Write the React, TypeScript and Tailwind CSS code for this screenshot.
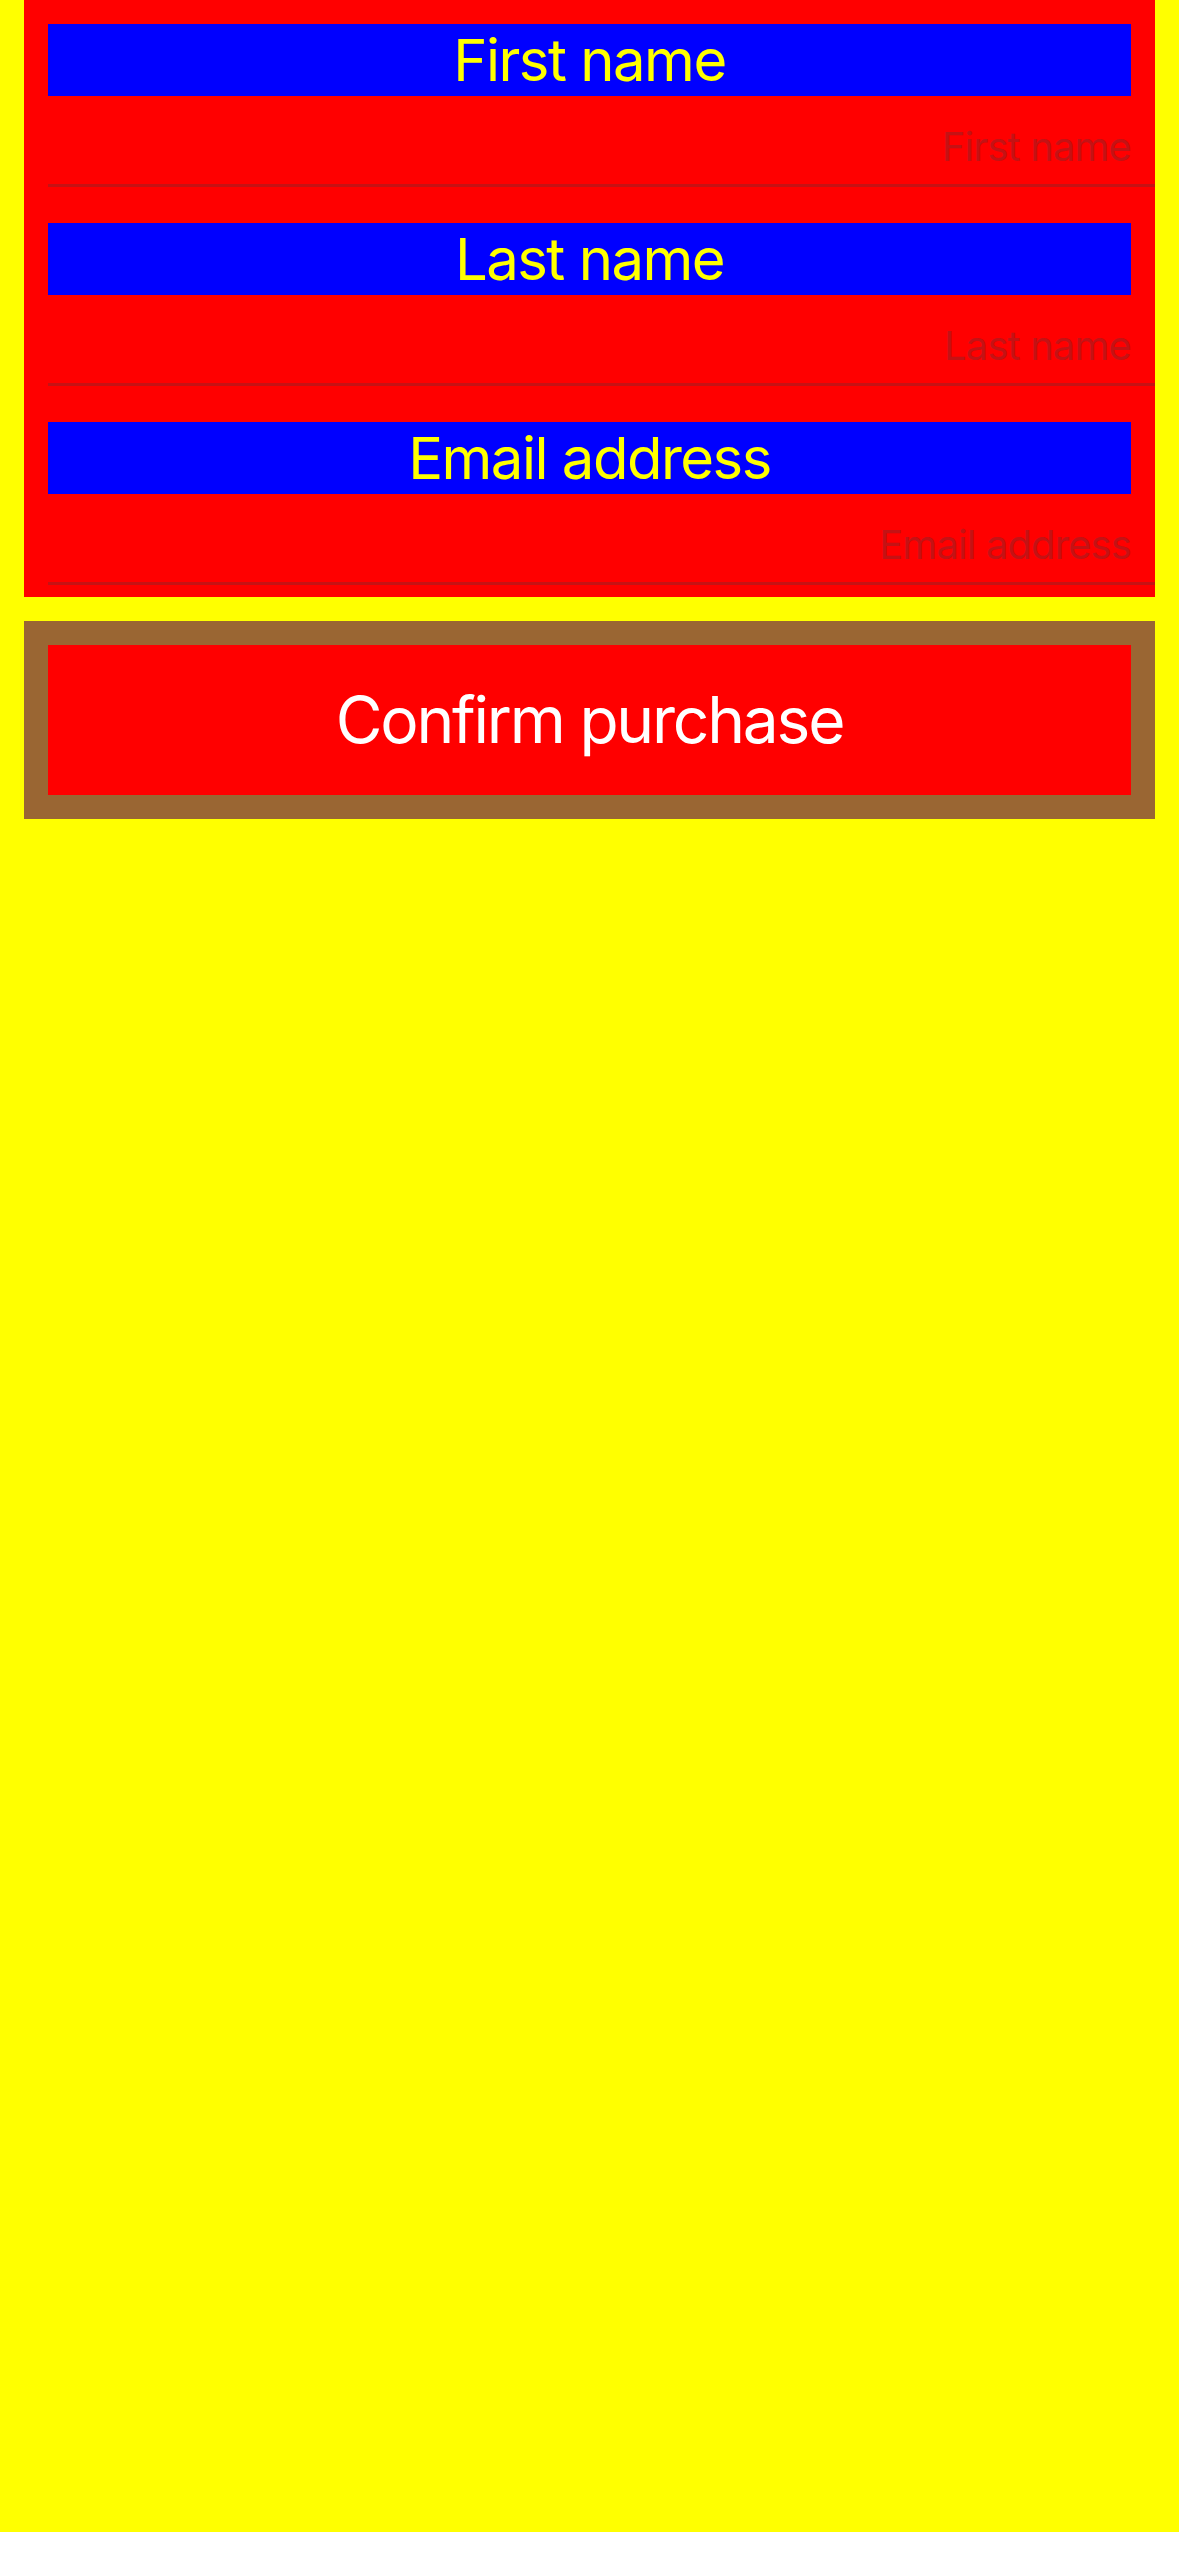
import React from "react";

const fields = ["First name", "Last name", "Email address"];

export default function App() {
  return (
    <div
      className="min-h-[2556px] w-full bg-[#ffff00] px-[24px]"
      style={{ fontFamily: "Inter, 'Noto Sans', sans-serif" }}
    >
      <div className="-mt-[24px] bg-[#ff0000] py-[12px]">
        {fields.map((f) => (
          <div key={f} className="ml-[24px] border-b-[3px] border-[#c61214] pt-[36px]">
            <div className="mr-[24px] flex h-[72px] items-center justify-center bg-[#0000ff] text-[58px] tracking-[-1.5px] text-[#ffff00]">
              {f}
            </div>
            <div className="h-[88px] pr-[24px] text-right">
              <div className="pt-[27px] text-[40px] leading-[48px] tracking-[-0.9px] text-[#c41214]">{f}</div>
            </div>
          </div>
        ))}
      </div>
      <div className="mt-[24px] bg-[#9a6633] p-[24px]">
        <button className="flex h-[150px] w-full items-center justify-center bg-[#ff0000] text-[64px] tracking-[-2.2px] text-white">
          Confirm purchase
        </button>
      </div>
    </div>
  );
}
